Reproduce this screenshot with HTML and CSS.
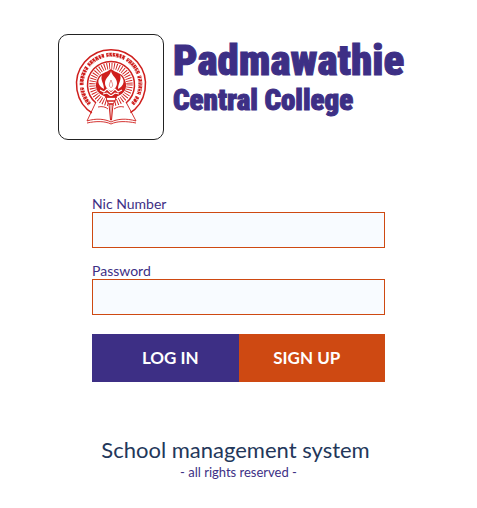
FILE: index.html
```html
<!DOCTYPE html>
<html lang="en">
<head>
<meta charset="utf-8">
<meta name="viewport" content="width=device-width, initial-scale=1">
<title>Padmawathie Central College</title>
<link rel="stylesheet" href="styles.css">
</head>
<body>
<div class="page">
  <header class="brand">
    <div class="crest">
      <svg viewBox="9 10 104 104" fill="none" stroke="#cf1f1d" aria-hidden="true">
        <path d="M43.500 89A34.500 34.500 0 1 1 78.500 89" stroke-width="1.500"/>
        <path d="M46 78A23.500 23.500 0 1 1 76 78" stroke-width="1.500"/>
        <!-- lettering band -->
        <path d="M39.700 79.200A29.300 29.300 0 1 1 82.300 79.200" stroke-width="4" stroke-dasharray="2.400 .6 2.900 .6 2.500 .6 3 .6 2.200 .6 2.700 2.400"/>
        <path d="M40.800 78.200A27.800 27.800 0 1 1 81.200 78.200" stroke="#fff" stroke-width="1" stroke-dasharray="1 2.300 .8 1.700"/>
        <path d="M39 80A30.200 30.200 0 1 1 83 80" stroke="#fff" stroke-width=".9" stroke-dasharray=".9 2.600 1.200 2.300"/>
        <!-- rays -->
        <circle cx="61" cy="59.500" r="18.500" stroke-width="6.500" stroke-dasharray=".9 1.520"/>
        <!-- lotus and flame -->
        <path fill="#cf1f1d" stroke="none" d="M61 44C56 48 50 48 48 53C44 60 46 67 52 70L58 73H64L70 70C76 67 78 60 74 53C72 48 66 48 61 44Z"/>
        <path fill="#fff" stroke="none" d="M61 46C62 51 67 53 67 58C67 62 64 65 61 66C58 65 55 62 55 58C55 53 60 51 61 46ZM52 50C50 55 54 58 54 64C48 61 46 55 52 50ZM70 50C72 55 68 58 68 64C74 61 76 55 70 50Z"/>
        <path d="M61 55C60 58 59 59 59.500 61C60 63 62 63 62.500 61C63 59 62 58 61 55Z" stroke-width=".5"/>
        <path d="M50 65L54 67L57 64L61 68L65 64L68 67L72 65M53 69L57 68L61 71L65 68L69 69" stroke="#fff" stroke-width="1.100"/>
        <!-- open book -->
        <path fill="#fff" d="M45.500 81L37 97C46 94 55 95 61 98C67 95 76 94 86 97L76.500 81C70 80 65 81 61 84C57 81 52 80 45.500 81Z" stroke="none"/>
        <path d="M45.500 78L37 96C46 93 55 94 61 97C67 94 76 93 86 96L76.500 78M37 98C46 96 55 96 61 99C67 96 76 96 86 98M48 82C52 81 56 82 58 84M64 84C67 82 70 81 74 82" stroke-width=".9"/>
        <!-- torch -->
        <path fill="#fff" d="M56 72H66L65 76L63 79L61.500 95H60.500L59 79L57 76Z" stroke-width="1"/>
        <path d="M55 72H67M57 76H65M59 79H63" stroke-width="1.300"/>
        <path d="M61 78V95" stroke-width=".7"/>
      </svg>
    </div>
    <h1 class="title">Padmawathie <span class="subtitle">Central College</span></h1>
  </header>
  <main>
    <form class="login">
      <label class="label" for="nic">Nic Number</label>
      <input class="field" id="nic" type="text">
      <label class="label" for="password">Password</label>
      <input class="field" id="password" type="password">
      <div class="actions">
        <button class="button button-login" type="submit">LOG IN</button>
        <button class="button button-signup" type="button">SIGN UP</button>
      </div>
    </form>
  </main>
  <footer class="footer">
    <p class="system">School management system</p>
    <p class="rights">- all rights reserved -</p>
  </footer>
</div>
</body>
</html>
```

FILE: styles.css
```css
* { box-sizing: border-box; }
body {
  margin: 0;
  background: #fff;
  color: #3d2f85;
  font-family: Lato, "Open Sans", sans-serif;
}
.page {
  max-width: 477px;
  margin: 0 auto;
  padding: 34px 0 24px;
}
.brand {
  display: flex;
  gap: 9px;
  padding-left: 58px;
}
.crest {
  flex: none;
  width: 106px;
  height: 106px;
  border: 1px solid #222;
  border-radius: 10px;
}
.crest svg { display: block; width: 100%; }
.title {
  margin: 0;
  font: 900 43px/52px Impact, "Roboto Condensed", Roboto, sans-serif;
  -webkit-text-stroke: 1px currentColor;
}
.subtitle {
  display: block;
  font-size: 29px;
  line-height: 28px;
}
.login {
  width: 100%;
  max-width: 293px;
  margin: 56px auto 0;
}
.label {
  display: block;
  font-size: 14px;
  line-height: 16px;
}
.field {
  display: block;
  width: 100%;
  height: 36px;
  margin-bottom: 15px;
  padding: 0 10px;
  border: 1px solid #ce4912;
  border-radius: 0;
  background: #f8fbff;
  color: inherit;
  font: inherit;
}
.actions {
  display: flex;
  padding-top: 4px;
}
.button {
  flex: 1;
  height: 48px;
  border: 0;
  color: #fff;
  font: bold 17px/20px Lato, "Open Sans", sans-serif;
}
.button-login { padding: 0 0 0 10px; background: #3d2f85; }
.button-signup { padding: 0 10px 0 0; background: #ce4912; }
.footer {
  margin-top: 54px;
  text-align: center;
}
.footer p { margin: 0; }
.system {
  padding-right: 6px;
  color: #23375a;
  font-size: 22px;
  line-height: 28px;
}
.rights {
  font-size: 13px;
  line-height: 16px;
}
```
